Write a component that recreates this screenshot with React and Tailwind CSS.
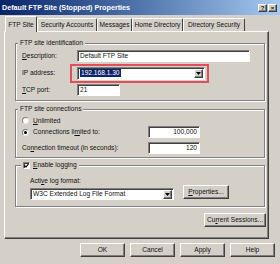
const sunken = 'bg-white border border-t-[#808080] border-l-[#808080] border-r-white border-b-white shadow-[inset_1px_1px_0_#404040]';
const raised = 'bg-[#d4d0c8] border border-t-white border-l-white border-r-[#404040] border-b-[#404040] shadow-[inset_-1px_-1px_0_#808080]';

const U = ({ children }) => <span className="underline underline-offset-1">{children}</span>;

const Arrow = ({ className = '' }) => (
    <div className={`${raised} w-[9px] h-[9px] flex items-center justify-center shrink-0 ${className}`}>
        <svg width="5" height="3" viewBox="0 0 5 3">
            <path d="M0 0h5L2.5 3z" fill="#000" />
        </svg>
    </div>
);

const Radio = ({ checked }) => (
    <div className="w-[7px] h-[7px] rounded-full bg-white border border-t-[#808080] border-l-[#808080] border-r-[#e8e8e8] border-b-[#e8e8e8] flex items-center justify-center shrink-0">
        {checked && <div className="w-[3px] h-[3px] rounded-full bg-black" />}
    </div>
);

const Button = ({ children, className = '' }) => (
    <div className={`${raised} h-[14px] flex items-center justify-center ${className}`}>{children}</div>
);

// width comes from the tab list below
const Tab = ({ label, w, active }) => (
    <div
        className={
            active
                ? 'h-[16px] relative z-10 bg-[#d4d0c8] border-t border-l border-r border-t-white border-l-white border-r-[#404040] rounded-t-[2px] flex items-center justify-center'
                : 'h-[13px] mb-[1px] bg-[#d4d0c8] border-t border-l border-r border-t-white border-l-white border-r-[#404040] rounded-t-[2px] flex items-center justify-center'
        }
        style={{ width: w }}
    >
        {label}
    </div>
);

const tabs = [
    { label: 'FTP Site', w: 32, active: true },
    { label: 'Security Accounts', w: 60 },
    { label: 'Messages', w: 35 },
    { label: 'Home Directory', w: 51 },
    { label: 'Directory Security', w: 62 },
];

export default function App() {
    return (
        <div
            className="w-[280px] h-[264px] bg-[#d4d0c8] overflow-hidden flex flex-col text-[6.6px] leading-[8px] text-[#111]"
            style={{ fontFamily: '"Liberation Sans", Arial, sans-serif' }}
        >
            {/* title bar */}
            <div className="h-[15px] bg-linear-to-r from-[#0a246a] to-[#a6caf0] flex items-center justify-between pl-[2px] pr-[3px]">
                <span className="text-white font-bold text-[7.2px]">Default FTP Site (Stopped) Properties</span>
                <div className="flex gap-[1px]">
                    <div className={`${raised} w-[9px] h-[8px] flex items-center justify-center font-bold text-[6px]`}>?</div>
                    <div className={`${raised} w-[9px] h-[8px] flex items-center justify-center font-bold text-[6px]`}>×</div>
                </div>
            </div>

            {/* tabs */}
            <div className="mt-[1px] h-[16px] pl-[5px] flex items-end">
                {tabs.map((t) => (
                    <Tab key={t.label} {...t} />
                ))}
            </div>

            {/* panel */}
            <div className="-mt-[1px] ml-[4px] w-[265px] h-[208px] border border-t-white border-l-white border-r-[#404040] border-b-[#404040] shadow-[inset_-1px_-1px_0_#808080] flex flex-col">
                {/* FTP site identification */}
                <fieldset className="mt-[7px] ml-[10px] w-[250px] border border-[#808080] shadow-[inset_1px_1px_0_#fff,1px_1px_0_#fff] pl-[6px] pt-[3px] pb-[4px]">
                    <legend className="-ml-[4px] px-[2px] bg-[#d4d0c8] leading-[8px]">FTP site identification</legend>
                    <div className="h-[12px] flex items-center">
                        <span className="w-[55px]"><U>D</U>escription:</span>
                        <div className={`${sunken} w-[173px] h-[12px] flex items-center pl-[2px]`}>Default FTP Site</div>
                    </div>
                    <div className="h-[22px] flex items-center">
                        <span className="w-[55px]">IP address:</span>
                        <div className="relative">
                            <div className="absolute -left-[7px] -top-[3px] -right-[4px] -bottom-[3px] border-2 border-[#e0505a]" />
                            <div className={`${sunken} w-[128px] h-[13px] flex items-center justify-between pl-[2px] pr-[1px]`}>
                                <span className="bg-[#0a246a] text-white px-[1px]">192.168.1.30</span>
                                <Arrow />
                            </div>
                        </div>
                    </div>
                    <div className="h-[12px] flex items-center">
                        <span className="w-[55px]"><U>T</U>CP port:</span>
                        <div className={`${sunken} w-[43px] h-[12px] flex items-center pl-[2px]`}>21</div>
                    </div>
                </fieldset>

                {/* FTP site connections */}
                <fieldset className="mt-[4px] ml-[10px] w-[250px] border border-[#808080] shadow-[inset_1px_1px_0_#fff,1px_1px_0_#fff] pl-[6px] pt-[2px] pb-[3px]">
                    <legend className="-ml-[4px] px-[2px] bg-[#d4d0c8] leading-[8px]">FTP site connections</legend>
                    <div className="h-[11px] flex items-center gap-[4px]">
                        <Radio />
                        <span><U>U</U>nlimited</span>
                    </div>
                    <div className="h-[12px] flex items-center">
                        <div className="w-[126px] flex items-center gap-[4px]">
                            <Radio checked />
                            <span>Connections li<U>m</U>ited to:</span>
                        </div>
                        <div className={`${sunken} w-[52px] h-[12px] flex items-center justify-end pr-[2px]`}>100,000</div>
                    </div>
                    <div className="mt-[4px] h-[12px] flex items-center">
                        <span className="w-[126px]">Co<U>n</U>nection timeout (in seconds):</span>
                        <div className={`${sunken} w-[52px] h-[12px] flex items-center justify-end pr-[2px]`}>120</div>
                    </div>
                </fieldset>

                {/* logging */}
                <fieldset className="mt-[3px] ml-[10px] w-[250px] border border-[#808080] shadow-[inset_1px_1px_0_#fff,1px_1px_0_#fff] pl-[6px] pb-[6px]">
                    <legend className="-ml-[1px] px-[2px] bg-[#d4d0c8] leading-[8px] flex items-center gap-[3px]">
                        <div className={`${sunken} w-[7px] h-[7px] flex items-center justify-center`}>
                            <svg width="5" height="5" viewBox="0 0 5 5">
                                <path d="M0.5 2.5L2 4L4.5 0.8" stroke="#000" strokeWidth="1.1" fill="none" />
                            </svg>
                        </div>
                        <span><U>E</U>nable logging</span>
                    </legend>
                    <div className="pl-[8px]">
                        <div className="mt-[7px] h-[9px] flex items-center">Acti<U>v</U>e log format:</div>
                        <div className="h-[15px] flex items-start gap-[9px]">
                            <div className={`${sunken} mt-[3px] w-[144px] h-[12px] flex items-center justify-between pl-[2px] pr-[1px]`}>
                                <span>W3C Extended Log File Format</span>
                                <Arrow />
                            </div>
                            <Button className="w-[46px]"><span><U>P</U>roperties...</span></Button>
                        </div>
                    </div>
                </fieldset>

                <div className="mt-[6px] ml-[10px] w-[251px] flex justify-end">
                    <Button className="w-[62px]"><span>Cu<U>r</U>rent Sessions...</span></Button>
                </div>
            </div>

            {/* dialog buttons */}
            <div className="mt-[4px] pr-[5px] flex justify-end gap-[5px]">
                <Button className="w-[45px]">OK</Button>
                <Button className="w-[45px]">Cancel</Button>
                <Button className="w-[45px]">Apply</Button>
                <Button className="w-[45px]">Help</Button>
            </div>
        </div>
    );
}
